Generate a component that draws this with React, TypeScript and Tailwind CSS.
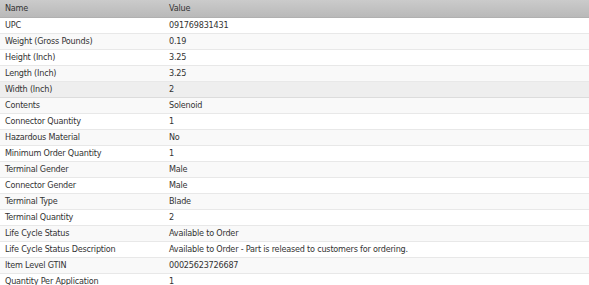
const rows: [string, string][] = [
  ["UPC", "091769831431"],
  ["Weight (Gross Pounds)", "0.19"],
  ["Height (Inch)", "3.25"],
  ["Length (Inch)", "3.25"],
  ["Width (Inch)", "2"],
  ["Contents", "Solenoid"],
  ["Connector Quantity", "1"],
  ["Hazardous Material", "No"],
  ["Minimum Order Quantity", "1"],
  ["Terminal Gender", "Male"],
  ["Connector Gender", "Male"],
  ["Terminal Type", "Blade"],
  ["Terminal Quantity", "2"],
  ["Life Cycle Status", "Available to Order"],
  ["Life Cycle Status Description", "Available to Order - Part is released to customers for ordering."],
  ["Item Level GTIN", "00025623726687"],
  ["Quantity Per Application", "1"],
];

const App = () => {
  return (
    <div className="w-[589px] h-[285px] overflow-hidden bg-white text-[9px] tracking-[-0.2px] text-[#333] font-['DejaVu_Sans_Condensed','DejaVu_Sans',sans-serif]">
      <div className="flex h-[18px] items-center bg-gradient-to-b from-[#cbcbcb] to-[#b9b9b9] border-b border-[#b0b0b0]">
        <div className="w-[164px] pl-[5px]">Name</div>
        <div className="flex-1 pl-[5px]">Value</div>
      </div>
      {rows.map(([name, value], i) => (
        <div
          key={name}
          className={
            "flex h-[16px] items-center border-b " +
            (i === 4
              ? "bg-[#eeeeee] border-[#dcdcdc]"
              : i % 2 === 0
              ? "bg-white border-[#e8e8e8]"
              : "bg-[#f9f9f9] border-[#e8e8e8]")
          }
        >
          <div className="w-[164px] pl-[5px] whitespace-nowrap">{name}</div>
          <div className="flex-1 pl-[5px] whitespace-nowrap">{value}</div>
        </div>
      ))}
    </div>
  );
};

export default App;
